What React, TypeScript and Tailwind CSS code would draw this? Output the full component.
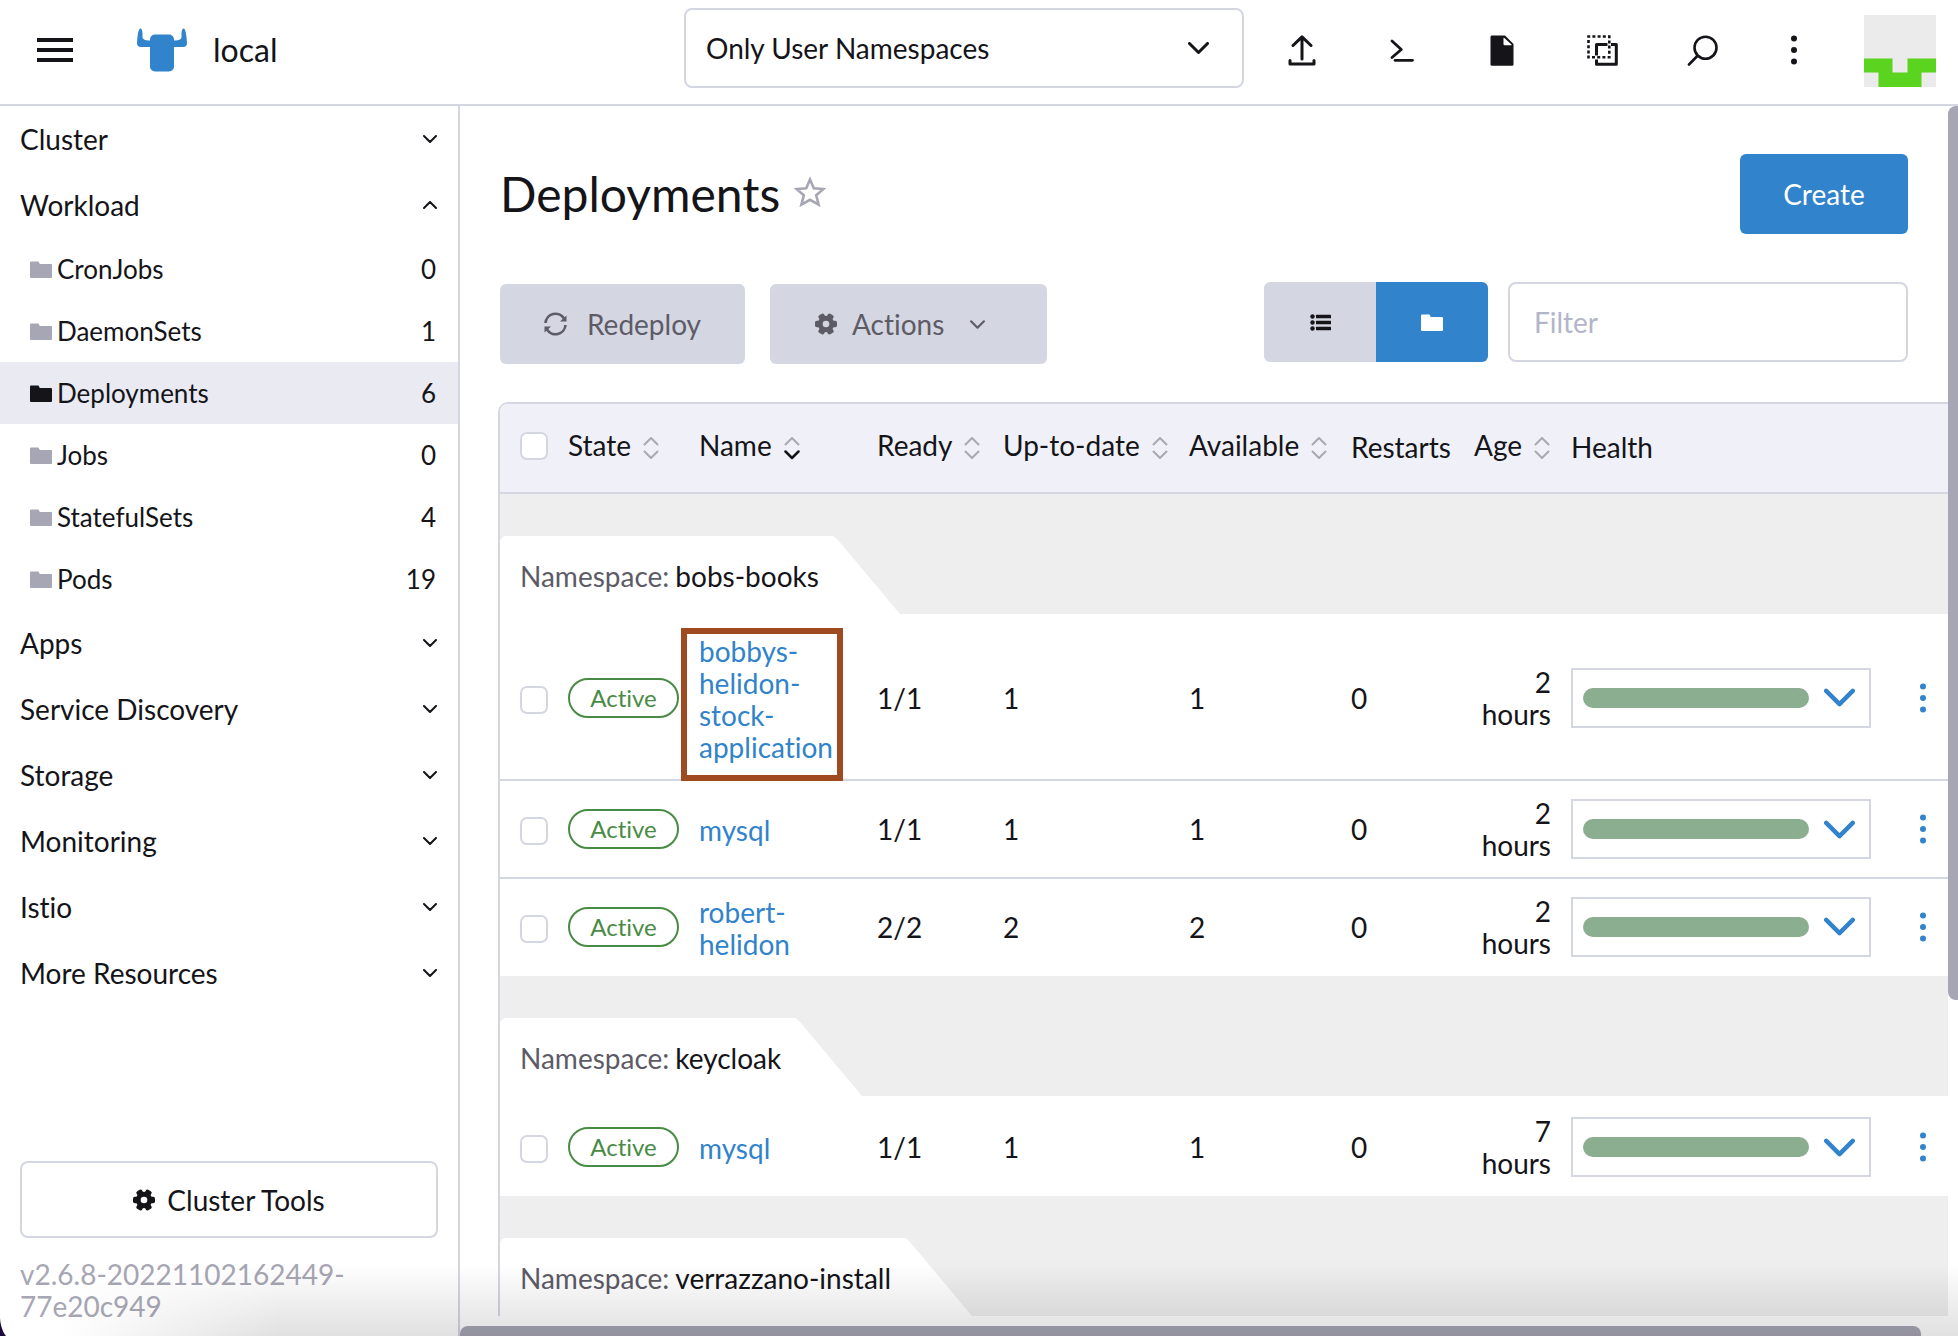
import React from "react";

type IconProps = { className?: string };

const FOLDER = "M1 0.5H8.5L9.8 3H21Q22 3 22 4V16Q22 17 21 17H1Q0 17 0 16V1.5Q0 0.5 1 0.5Z";

function Folder({ className = "" }: IconProps) {
  return (
    <svg className={className} width="22" height="17" viewBox="0 0 22 17" fill="currentColor" aria-hidden="true">
      <path d={FOLDER} />
    </svg>
  );
}

function Chevron({ className = "" }: IconProps) {
  return (
    <svg className={className} viewBox="0 0 14 8" fill="none" stroke="currentColor" strokeLinecap="round" strokeLinejoin="round" aria-hidden="true">
      <path d="M1 1l6 6 6-6" />
    </svg>
  );
}

function Gear({ className = "" }: IconProps) {
  return (
    <svg className={className} width="22" height="22" viewBox="0 0 22 22" aria-hidden="true">
      <g fill="currentColor">
        <circle cx="11" cy="11" r="8.2" />
        {[0, 60, 120].map((a) => (
          <rect key={a} x="0" y="7.8" width="22" height="6.4" rx="1.8" transform={`rotate(${a} 11 11)`} />
        ))}
      </g>
      <circle cx="11" cy="11" r="3.3" className="fill-[var(--hole)]" />
    </svg>
  );
}

function Dots({ className = "" }: IconProps) {
  return (
    <svg className={className} width="6" height="30" viewBox="0 0 6 30" fill="currentColor" aria-hidden="true">
      <circle cx="3" cy="3.5" r="3" />
      <circle cx="3" cy="15" r="3" />
      <circle cx="3" cy="26.5" r="3" />
    </svg>
  );
}

function SortIcon({ active }: { active?: boolean }) {
  return (
    <svg width="16" height="24" viewBox="0 0 16 24" fill="none" strokeWidth="2" strokeLinecap="round" strokeLinejoin="round" aria-hidden="true">
      <path className="stroke-[#a9a9ae]" d="M1.500 8.500L8 2l6.500 6.500" />
      <path className={active ? "stroke-[#141419]" : "stroke-[#a9a9ae]"} strokeWidth={active ? 2.5 : 2} d="M1.500 15.500L8 22l6.500-6.500" />
    </svg>
  );
}

const workloads = [
  { name: "CronJobs", count: 0 },
  { name: "DaemonSets", count: 1 },
  { name: "Deployments", count: 6, active: true },
  { name: "Jobs", count: 0 },
  { name: "StatefulSets", count: 4 },
  { name: "Pods", count: 19 },
];

function NavGroup({ label, open }: { label: string; open?: boolean }) {
  return (
    <button type="button" aria-expanded={!!open} className="flex h-[66px] w-full items-center justify-between pr-[21px] pl-5 text-left">
      <span>{label}</span>
      <Chevron className={open ? "h-2 w-3.5 rotate-180 stroke-2" : "h-2 w-3.5 stroke-2"} />
    </button>
  );
}

function Sidebar() {
  return (
    <aside className="flex w-[460px] shrink-0 flex-col border-r-2 border-[#d4d6e2]">
      <nav aria-label="Cluster navigation" className="grow">
        <NavGroup label="Cluster" />
        <NavGroup label="Workload" open />
        <ul>
          {workloads.map((w) => (
            <li key={w.name}>
              <a
                href="#"
                className={
                  w.active
                    ? "flex h-[62px] items-center bg-[#e9eaf2] pr-[22px] pl-[30px] text-[26px]"
                    : "flex h-[62px] items-center pr-[22px] pl-[30px] text-[26px]"
                }
              >
                <Folder className={w.active ? "" : "text-[#a7a6b4]"} />
                <span className="ml-[5px] grow">{w.name}</span>
                <span>{w.count}</span>
              </a>
            </li>
          ))}
        </ul>
        {["Apps", "Service Discovery", "Storage", "Monitoring", "Istio", "More Resources"].map((g) => (
          <NavGroup key={g} label={g} />
        ))}
      </nav>
      <div className="px-5 pb-3.5">
        <button type="button" className="flex h-[77px] w-full items-center justify-center gap-3 rounded-lg border-2 border-[#d4d6e2] [--hole:#fff]">
          <Gear />
          Cluster Tools
        </button>
        <p className="mt-5 text-[#a7a6b4] leading-8">
          v2.6.8-20221102162449-
          <br />
          77e20c949
        </p>
      </div>
    </aside>
  );
}

function IconButton({ label, children, narrow }: { label: string; children: React.ReactNode; narrow?: boolean }) {
  return (
    <button type="button" aria-label={label} className={narrow ? "flex h-20 w-[84px] items-center justify-center" : "flex h-20 w-[100px] items-center justify-center"}>
      {children}
    </button>
  );
}

function Header() {
  return (
    <header className="flex h-[106px] shrink-0 items-center border-b-2 border-[#d4d6e2] pr-[22px] pb-1 pl-[37px]">
      <button type="button" aria-label="Menu">
        <svg width="36" height="24" viewBox="0 0 36 24" fill="currentColor" aria-hidden="true">
          <rect width="36" height="4" />
          <rect y="10" width="36" height="4" />
          <rect y="20" width="36" height="4" />
        </svg>
      </button>
      <svg className="ml-16 text-[#3183cb]" width="50" height="44" viewBox="0 0 50 44" fill="currentColor" aria-hidden="true">
        <path d="M3.600 0.500C4.800 0.800 5.500 3 5.500 5.500V9C5.500 11.500 8 12.600 13 12.400V19H4Q0 19 0 15C0.300 9 1 4 2.200 1.500Q2.800 0.400 3.600 0.500Z" />
        <path d="M46.400 0.500C45.200 0.800 44.500 3 44.500 5.500V9C44.500 11.500 42 12.600 37 12.400V19H46Q50 19 50 15C49.700 9 49 4 47.800 1.500Q47.200 0.400 46.400 0.500Z" />
        <rect x="13" y="6.500" width="24" height="37" rx="5" />
      </svg>
      <span className="ml-[26px] text-[32px]">local</span>
      <div className="relative mt-2 ml-auto h-20 w-[560px] shrink-0 self-start">
        <select aria-label="Namespaces" className="size-full appearance-none rounded-lg border-2 border-[#d4d6e2] bg-white pr-16 pl-5">
          <option>Only User Namespaces</option>
        </select>
        <Chevron className="pointer-events-none absolute top-[34px] right-[35px] h-3 w-[21px] stroke-2" />
      </div>
      <div className="ml-2 flex items-center">
        <IconButton label="Import YAML">
          <svg width="28" height="31" viewBox="0 0 28 31" fill="none" stroke="currentColor" strokeWidth="3" strokeLinecap="round" strokeLinejoin="round" aria-hidden="true">
            <path d="M14 24V2M5 10.500L14 1.800l9 8.700M2 25.500V29H26V25.500" />
          </svg>
        </IconButton>
        <IconButton label="Kubectl shell">
          <svg width="24" height="31" viewBox="0 0 24 31" fill="none" stroke="currentColor" strokeWidth="2.800" strokeLinecap="round" strokeLinejoin="round" aria-hidden="true">
            <path d="M2 6l9.300 8.500L2 22.500M5 25.300H22.500" />
          </svg>
        </IconButton>
        <IconButton label="Download KubeConfig">
          <svg width="24" height="31" viewBox="0 0 24 31" aria-hidden="true">
            <path fill="currentColor" d="M1.500 0.500H15L23.500 9V29.500Q23.500 30.800 22 30.800H2Q0.500 30.800 0.500 29.500V2Q0.500 0.500 1.500 0.500Z" />
            <path className="fill-white" d="M13.500 3.200Q13.500 2.200 14.300 3L21.500 9.400Q22 10.200 21 10.200H14.500Q13.500 10.200 13.500 9.300Z" />
          </svg>
        </IconButton>
        <IconButton label="Copy KubeConfig">
          <svg width="31" height="31" viewBox="0 0 31 31" fill="none" stroke="currentColor" strokeWidth="2.600" aria-hidden="true">
            <path strokeDasharray="3 2.200" d="M8 22.300H1.500V1.500H22.300V22.300H8" />
            <path strokeWidth="3" strokeLinejoin="round" d="M9.500 20.500V9.500H20.500M24 9.500H29.300V29.300H9.500V24.500" />
          </svg>
        </IconButton>
        <IconButton label="Resource search">
          <svg width="31" height="31" viewBox="0 0 31 31" fill="none" stroke="currentColor" strokeWidth="2.600" strokeLinecap="round" aria-hidden="true">
            <circle cx="18.500" cy="12.700" r="11" />
            <path d="M10.300 21L2 29.500" />
          </svg>
        </IconButton>
        <IconButton label="More" narrow>
          <Dots />
        </IconButton>
      </div>
      <svg className="mt-0.5 ml-7 shrink-0" width="72" height="72" viewBox="0 0 72 72" role="img" aria-label="User avatar">
        <rect width="72" height="72" fill="#ebebeb" />
        <path fill="#5bd41f" d="M0 43.500H28.500V57.500H43.500V43.500H72V57.500H57.500V72H14.500V57.500H0Z" />
      </svg>
    </header>
  );
}

const columns: { label: string; sortable?: boolean; active?: boolean }[] = [
  { label: "State", sortable: true },
  { label: "Name", sortable: true, active: true },
  { label: "Ready", sortable: true },
  { label: "Up-to-date", sortable: true },
  { label: "Available", sortable: true },
  { label: "Restarts" },
  { label: "Age", sortable: true },
  { label: "Health" },
];

type Deployment = {
  name: string;
  ready: string;
  upToDate: number;
  available: number;
  restarts: number;
  age: string;
  height: string;
  marked?: boolean;
};

const groups: { namespace: string; rows: Deployment[] }[] = [
  {
    namespace: "bobs-books",
    rows: [
      { name: "bobbys-helidon-stock-application", ready: "1/1", upToDate: 1, available: 1, restarts: 0, age: "2 hours", height: "h-[167px]", marked: true },
      { name: "mysql", ready: "1/1", upToDate: 1, available: 1, restarts: 0, age: "2 hours", height: "h-[98px]" },
      { name: "robert-helidon", ready: "2/2", upToDate: 2, available: 2, restarts: 0, age: "2 hours", height: "h-[97px]" },
    ],
  },
  {
    namespace: "keycloak",
    rows: [{ name: "mysql", ready: "1/1", upToDate: 1, available: 1, restarts: 0, age: "7 hours", height: "h-[100px]" }],
  },
  { namespace: "verrazzano-install", rows: [] },
];

const CHECKBOX = "block size-7 appearance-none rounded-[7px] border-2 border-[#d4d6e2] bg-white";

function DeploymentRow({ row, first, last }: { row: Deployment; first: boolean; last: boolean }) {
  const line = `${last ? "" : "border-b-2 border-[#d4d6e2]"} ${first ? "pt-0.5" : last ? "pb-0.5" : ""}`;
  return (
    <tr className={row.height}>
      <td className={`pl-5 ${line}`}>
        <input type="checkbox" aria-label={`Select ${row.name}`} className={`mt-1 ${CHECKBOX}`} />
      </td>
      <td className={`px-2 ${line}`}>
        <span className="flex h-10 w-[111px] items-center justify-center rounded-full border-2 border-[#498b44] text-2xl text-[#498b44]">Active</span>
      </td>
      <td className={`relative px-2 ${line}`}>
        <a href="#" className="block w-32 pt-0.5 text-[#3183cb]">
          {row.name}
        </a>
        {row.marked && <span aria-hidden="true" className="absolute top-3.5 -left-2.5 h-[153px] w-[162px] border-6 border-[#a04a22]" />}
      </td>
      <td className={`px-2 ${line}`}>{row.ready}</td>
      <td className={`px-2 ${line}`}>{row.upToDate}</td>
      <td className={`px-2 ${line}`}>{row.available}</td>
      <td className={`px-2 ${line}`}>{row.restarts}</td>
      <td className={`pr-3 text-right ${line}`}>{row.age}</td>
      <td className={`px-2 ${line}`}>
        <button type="button" aria-label={`Health of ${row.name}`} className="flex h-[60px] w-full items-center border-2 border-[#d4d6e2] pr-3.5 pl-2.5">
          <span className="h-5 grow rounded-full bg-[#8bad90]" />
          <Chevron className="ml-[15px] h-[19px] w-[31px] stroke-2 text-[#3183cb]" />
        </button>
      </td>
      <td className={line}>
        <button type="button" aria-label={`Actions for ${row.name}`} className="mx-auto block px-4 text-[#3183cb]">
          <Dots />
        </button>
      </td>
    </tr>
  );
}

function DeploymentTable() {
  return (
    <table className="w-full min-w-[1471px] table-fixed border-separate border-spacing-0 rounded-t-[10px] border-2 border-b-0 border-[#d4d6e2]">
      <colgroup>
        <col className="w-[60px]" />
        <col className="w-[131px]" />
        <col className="w-[178px]" />
        <col className="w-[126px]" />
        <col className="w-[186px]" />
        <col className="w-[162px]" />
        <col className="w-[123px]" />
        <col className="w-[97px]" />
        <col className="w-[316px]" />
        <col className="w-[88px]" />
      </colgroup>
      <thead>
        <tr className="h-[90px] bg-[#f0f0f8]">
          <th className="rounded-tl-lg border-b-2 border-[#d4d6e2] pb-1 pl-5">
            <input type="checkbox" aria-label="Select all" className={CHECKBOX} />
          </th>
          {columns.map((c) => (
            <th key={c.label} scope="col" className="border-b-2 border-[#d4d6e2] pb-0.5 pl-2 text-left font-normal whitespace-nowrap">
              {c.sortable ? (
                <button type="button" className="flex items-center gap-3 pb-1">
                  {c.label}
                  <span className="pt-1.5">
                    <SortIcon active={c.active} />
                  </span>
                </button>
              ) : (
                c.label
              )}
            </th>
          ))}
          <td className="border-b-2 border-[#d4d6e2]" />
        </tr>
      </thead>
      {groups.map((g) => (
        <tbody key={g.namespace}>
          <tr>
            <td colSpan={10} className="bg-[#eee] pt-[42px]">
              <div className="flex h-[78px]">
                <div className="flex items-center gap-1.5 rounded-tl-md bg-white pt-0.5 pr-3.5 pl-5">
                  <span className="text-[#5d5b66]">Namespace:</span>
                  <span>{g.namespace}</span>
                </div>
                <svg width="68" height="78" viewBox="0 0 68 78" className="-ml-px fill-white" aria-hidden="true">
                  <path d="M0 0C2.500 0 4 1.800 6 4L68 78H0Z" />
                </svg>
              </div>
            </td>
          </tr>
          {g.rows.map((r, i) => (
            <DeploymentRow key={r.name} row={r} first={i === 0} last={i === g.rows.length - 1} />
          ))}
        </tbody>
      ))}
    </table>
  );
}

function Toolbar() {
  return (
    <div className="flex items-start pr-10 pl-0.5">
      <button type="button" className="mt-0.5 flex h-20 w-[245px] items-center justify-center gap-5 rounded-md bg-[#d4d6e2] text-[#5d5b66]">
        <svg width="23" height="24" viewBox="0 0 23 24" fill="none" stroke="currentColor" strokeWidth="2.600" aria-hidden="true">
          <path d="M1.500 11A10 10 0 0 1 20 6.500M21.500 13A10 10 0 0 1 3 17.500" />
          <path fill="currentColor" stroke="none" d="M22.500 3.500V9.500H16L22.500 3.500ZM0.500 20.500V14.500H7L0.500 20.500Z" />
        </svg>
        Redeploy
      </button>
      <button type="button" className="mt-0.5 ml-[25px] flex h-20 w-[277px] items-center rounded-md bg-[#d4d6e2] pl-[45px] text-[#5d5b66] [--hole:#d4d6e2]">
        <Gear />
        <span className="ml-[15px]">Actions</span>
        <Chevron className="ml-[26px] h-[9px] w-[15px] stroke-2" />
      </button>
      <div className="ml-auto flex overflow-hidden rounded-md">
        <button type="button" aria-label="Flat list" className="flex h-20 w-28 items-center justify-center bg-[#d4d6e2]">
          <svg width="21" height="17" viewBox="0 0 21 17" fill="currentColor" aria-hidden="true">
            {[2.5, 8.5, 14.5].map((y) => (
              <g key={y}>
                <circle cx="2.500" cy={y} r="2.200" />
                <rect x="6" y={y - 1.7} width="15" height="3.400" rx="0.500" />
              </g>
            ))}
          </svg>
        </button>
        <button type="button" aria-label="Group by namespace" className="flex h-20 w-28 items-center justify-center bg-[#3183cb] text-white">
          <Folder />
        </button>
      </div>
      <input type="search" aria-label="Filter" placeholder="Filter" className="ml-5 h-20 w-[400px] rounded-lg border-2 border-[#d4d6e2] px-6 placeholder:text-[#b3b5cb]" />
    </div>
  );
}

export default function App() {
  return (
    <div className="relative flex h-screen flex-col overflow-hidden bg-white font-['Lato',sans-serif] text-[28px] leading-8 text-[#141419] [font-variant-ligatures:none]">
      <Header />
      <div className="flex min-h-0 grow">
        <Sidebar />
        <div className="grid min-w-0 grow grid-cols-[minmax(0,1fr)_10px] grid-rows-[minmax(0,1fr)_10px]">
          <main className="overflow-hidden pl-[38px]">
            <div className="flex items-center pt-12 pr-10 pl-0.5">
              <h1 className="text-[48px] leading-[80px]">Deployments</h1>
              <button type="button" aria-label="Favorite" className="ml-3.5 pb-1">
                <svg width="32" height="32" viewBox="0 0 32 32" fill="none" stroke="#a7a6b4" strokeWidth="2.600" aria-hidden="true">
                  <path d="M16 3.500L19.800 12.200L29.500 13L22.200 19.300L24.600 28.700L16 23.800L7.400 28.700L9.800 19.300L2.500 13L12.200 12.200Z" />
                </svg>
              </button>
              <button type="button" className="ml-auto h-20 w-[168px] rounded-md bg-[#3183cb] text-white">
                Create
              </button>
            </div>
            <div className="mt-12">
              <Toolbar />
            </div>
            <div className="mt-[38px]">
              <DeploymentTable />
            </div>
          </main>
          <div aria-hidden="true">
            <div className="h-[73.3%] rounded-l-lg bg-[#a7a6b4]" />
          </div>
          <div aria-hidden="true">
            <div className="mr-[27px] h-full rounded-t-lg bg-[#a7a6b4]" />
          </div>
        </div>
      </div>
      <div
        aria-hidden="true"
        className="pointer-events-none absolute inset-x-0 bottom-0 h-[72px] bg-linear-to-b from-transparent to-black/12 [mask-image:linear-gradient(to_right,transparent_60px,black_280px)]"
      />
      <svg className="absolute bottom-0 left-0" width="6" height="18" viewBox="0 0 6 18" aria-hidden="true">
        <path fill="#1c0a3e" d="M0 0C0.500 8 3 14 6 18H0Z" />
      </svg>
    </div>
  );
}
